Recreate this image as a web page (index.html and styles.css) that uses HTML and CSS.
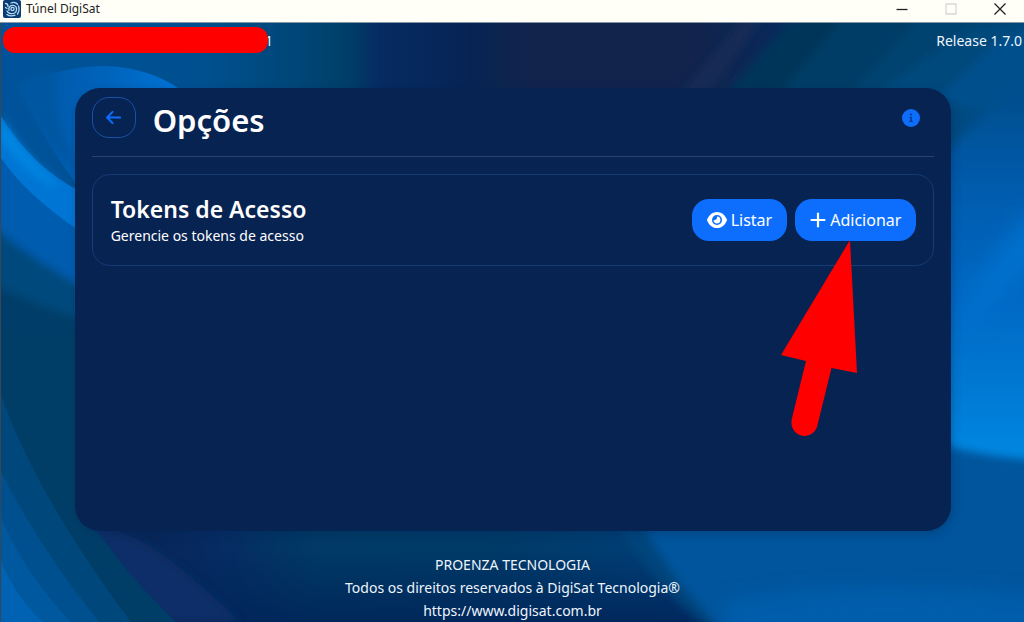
FILE: index.html
```html
<!DOCTYPE html>
<html lang="pt-BR">
<head>
<meta charset="utf-8">
<meta name="viewport" content="width=device-width, initial-scale=1">
<title>Túnel DigiSat</title>
<link rel="stylesheet" href="styles.css">
</head>
<body>
<div class="window">
  <header class="titlebar">
    <svg class="app-icon" viewBox="0 0 18 18" aria-hidden="true">
      <rect width="18" height="18" rx="2" fill="#0b3a75"/>
      <g fill="none" stroke="#b5dcf2" stroke-width="1.3" stroke-linecap="round">
        <circle cx="9.500" cy="9" r="1.600"/>
        <path d="M6 10.500C5 7 8 4.600 11 5.500c3.500 1.200 3.200 6 .5 7.500-3 1.500-6.500.5-7.500-2"/>
        <path d="M2.500 3.500c2 0 2.500 1.500 2.500 3M2.500 7.500l1.500 1M8 3c2-.8 5-.5 6.500 1.200M15.500 6c1 3 .5 6-1 8M4 14.500c2 1.500 5 1.700 8 .7"/>
      </g>
    </svg>
    <span class="titlebar-name">Túnel DigiSat</span>
    <div class="window-controls">
      <button class="window-button" type="button" aria-label="Minimizar"><svg viewBox="0 0 12 12"><path d="M.5 6.500h11"/></svg></button>
      <button class="window-button" type="button" aria-label="Maximizar" disabled><svg viewBox="0 0 12 12"><path d="M1 1h10v10H1z"/></svg></button>
      <button class="window-button" type="button" aria-label="Fechar"><svg viewBox="0 0 12 12"><path d="M.5.5l11 11M11.500.5l-11 11"/></svg></button>
    </div>
  </header>

  <div class="app">
    <svg class="wallpaper" viewBox="0 23 1024 599" preserveAspectRatio="none" aria-hidden="true">
      <defs>
        <linearGradient id="base" x1="0" x2="1" y1="0" y2="0">
          <stop offset="0" stop-color="#00539b"/><stop offset=".2" stop-color="#00508f"/>
          <stop offset=".29" stop-color="#004677"/><stop offset=".34" stop-color="#003e69"/>
          <stop offset=".37" stop-color="#062b63"/><stop offset=".46" stop-color="#062453"/>
          <stop offset=".52" stop-color="#12244c"/><stop offset=".68" stop-color="#12244c"/>
          <stop offset=".76" stop-color="#082a5b"/><stop offset=".84" stop-color="#003d66"/>
          <stop offset=".93" stop-color="#004a80"/><stop offset="1" stop-color="#005297"/>
        </linearGradient>
        <linearGradient id="right" x1="0" x2="0" y1="0" y2="1">
          <stop offset="0" stop-color="#004b85"/><stop offset=".25" stop-color="#0059a8"/>
          <stop offset=".6" stop-color="#006ac6"/><stop offset=".85" stop-color="#007cd5"/>
          <stop offset="1" stop-color="#0088e2"/>
        </linearGradient>
        <linearGradient id="arc" x1="0" x2="1" y1="0" y2="0">
          <stop offset="0" stop-color="#0056a3"/><stop offset=".5" stop-color="#0062b9"/><stop offset="1" stop-color="#0072d6"/>
        </linearGradient>
        <linearGradient id="floor" x1="0" x2="1" y1="0" y2="0">
          <stop offset="0" stop-color="#082c65"/><stop offset=".16" stop-color="#082452"/>
          <stop offset=".3" stop-color="#062b63"/><stop offset=".44" stop-color="#003a65"/>
          <stop offset=".7" stop-color="#003a68"/><stop offset="1" stop-color="#00407b"/>
        </linearGradient>
        <linearGradient id="floor-shade" x1="0" x2="0" y1="0" y2="1">
          <stop offset="0" stop-color="#002459" stop-opacity="0"/><stop offset="1" stop-color="#002459" stop-opacity=".85"/>
        </linearGradient>
        <filter id="soft" x="-20%" y="-20%" width="140%" height="140%"><feGaussianBlur stdDeviation="4"/></filter>
        <filter id="softer" x="-30%" y="-30%" width="160%" height="160%"><feGaussianBlur stdDeviation="10"/></filter>
      </defs>
      <rect y="23" width="1024" height="599" fill="url(#base)"/>
      <g filter="url(#soft)">
        <path d="M720 100L800 10h70L785 100z" fill="#05345a"/>
        <path d="M675 100L750 10h18L705 100z" fill="#182955"/>
        <path d="M775 100L850 10h190V100z" fill="#053d66"/>
        <path d="M845 100L925 10h120V100z" fill="#00426f"/>
        <path d="M865 100L965 30 1050 10V100z" fill="#00487c"/>
        <path d="M935 100L1000 40 1050 20V120z" fill="#004f8d"/>
      </g>
      <path d="M18 86Q60 66 105 66Q150 68 180 90L80 190Q45 145 18 86z" fill="url(#arc)"/>
      <path d="M16 84Q35 73 55 70C48 100 60 145 85 178Q45 146 16 84z" fill="#0056a0" filter="url(#soft)"/>
      <g filter="url(#soft)">
        <path d="M-15 195L90 300V560H-15z" fill="#003c68"/>
        <path d="M-15 212Q30 262 90 292V322Q30 305-15 280z" fill="#00487c"/>
        <path d="M-15 112Q20 165 90 202V292Q30 260-15 220z" fill="#005cae"/>
      </g>
      <path d="M0 116Q30 166 80 192V232Q25 195 0 158z" fill="#0075d3"/>
      <path d="M0 118Q28 162 52 180L56 188Q22 172 0 138z" fill="#0088e4" filter="url(#soft)"/>
      <path d="M70 524H690L720 622H0L60 480z" fill="url(#floor)"/>
      <path d="M70 550H690L720 622H0z" fill="url(#floor-shade)"/>
      <path d="M240 622Q165 550 130 536L70 510V622z" fill="#082d67" filter="url(#soft)"/>
      <path d="M0 330L75 335V500Q120 570 175 622H0z" fill="#003e68"/>
      <path d="M0 395Q35 495 130 622H0z" fill="#00487c"/>
      <path d="M0 472Q40 550 98 622H0z" fill="#00508f"/>
      <path d="M0 518Q25 575 70 622H0z" fill="#00589f"/>
      <path d="M0 562Q17 600 42 622H0z" fill="#0062b2"/>
      <path d="M615 520H1060V650H740Q660 600 615 520z" fill="#00457c" filter="url(#soft)"/>
      <path d="M640 520H1060V650H750Q680 600 640 520z" fill="#00559c" filter="url(#soft)"/>
      <path d="M930 430H1060V622H930z" fill="#00559c"/>
      <path d="M720 605Q850 575 1060 600V660H740z" fill="#005dac" filter="url(#softer)"/>
      <path d="M930 180Q965 115 1060 72V461Q975 458 930 440z" fill="url(#right)" filter="url(#soft)"/>
      <path d="M955 350Q975 250 1060 190V250Q1010 280 955 350z" fill="#0070cc" filter="url(#softer)"/>
    </svg>

    <div class="status">
      <div class="status-id"><span class="redaction"></span><span class="status-tail">1</span></div>
      <span>Release 1.7.0</span>
    </div>

    <main class="panel">
      <div class="panel-head">
        <button class="back" type="button" aria-label="Voltar">
          <svg viewBox="0 0 16 16" aria-hidden="true"><path d="M15 8H1.500M7 2L1.200 8 7 14"/></svg>
        </button>
        <h1>Opções</h1>
        <button class="info" type="button" aria-label="Informações">
          <svg viewBox="0 0 18 18" aria-hidden="true"><circle cx="9" cy="9" r="9" fill="#0d6efd"/><g fill="#0a3a8c"><circle cx="9" cy="5.500" r="1.100"/><path d="M7.300 7.800h2.500v3.900h1v1.200H7.200v-1.200h1.100V9h-1z"/></g></svg>
        </button>
      </div>
      <section class="option">
        <div class="option-text">
          <h2>Tokens de Acesso</h2>
          <p>Gerencie os tokens de acesso</p>
        </div>
        <div class="actions">
          <button class="action" type="button">
            <svg class="eye" viewBox="0 0 20 16" aria-hidden="true"><path fill="#fff" d="M10 0C5 0 1.700 3.700.2 7.300a2 2 0 000 1.400C1.700 12.300 5 16 10 16s8.300-3.700 9.800-7.300a2 2 0 000-1.400C18.300 3.700 15 0 10 0z"/><circle cx="10" cy="8" r="5" fill="#0d6efd"/><path fill="#fff" d="M10 4.600A3.400 3.400 0 116.600 8c1.900.7 4-1.100 3.400-3.400z"/></svg>
            Listar
          </button>
          <button class="action" type="button">
            <svg class="plus" viewBox="0 0 16 16" aria-hidden="true"><path d="M8 1.500v13M1.500 8h13"/></svg>
            Adicionar
          </button>
          <svg class="pointer" viewBox="0 0 76 196" aria-hidden="true"><path fill="#f00" d="M69 0L76 133 50.500 128 36 187C33 195.500 25 196 22 196 14 195 8.500 187 11 178L25 121 0 115z"/></svg>
        </div>
      </section>
    </main>

    <footer class="footer">
      <p>PROENZA TECNOLOGIA</p>
      <p>Todos os direitos reservados à DigiSat Tecnologia®</p>
      <p><a href="https://www.digisat.com.br">https://www.digisat.com.br</a></p>
    </footer>
  </div>
</div>
</body>
</html>
```
FILE: styles.css
```css
* { box-sizing: border-box; }

body {
  margin: 0;
  color: #fff;
  font: 14px/23px "Segoe UI", "Noto Sans", sans-serif;
}

h1, h2, p { margin: 0; }

button {
  padding: 0;
  border: 0;
  background: none;
  color: inherit;
  font: inherit;
}

svg { display: block; }

.window {
  display: flex;
  flex-direction: column;
  min-height: 100vh;
}

.titlebar {
  display: flex;
  align-items: center;
  height: 23px;
  padding: 0 0 5px 3px;
  gap: 5px;
  background: #fffff8;
  border-bottom: 1px solid #8796a5;
  color: #222;
  font-size: 12px;
  line-height: 16px;
}

.app-icon { width: 18px; height: 18px; }

.window-controls {
  display: flex;
  margin-left: auto;
}

.window-button {
  display: grid;
  place-items: center;
  width: 49px;
  height: 17px;
}

.window-button svg {
  width: 12px;
  height: 12px;
  fill: none;
  stroke: #222;
  stroke-width: 1.3;
}

.window-button:disabled svg { stroke: #d8d8d4; }

.app {
  position: relative;
  isolation: isolate;
  display: flex;
  flex: 1;
  flex-direction: column;
  border-left: 1px solid #3d4650;
  background: #00508f;
}

.wallpaper {
  position: absolute;
  inset: 0;
  z-index: -1;
  width: 100%;
  height: 100%;
}

.status {
  display: flex;
  align-items: center;
  justify-content: space-between;
  padding: 3px 2px 5px 2px;
  height: 36px;
  color: #eef5fc;
}

.status-id {
  display: flex;
  align-items: center;
}

.redaction {
  z-index: 1;
  width: 265px;
  height: 26px;
  border-radius: 12px;
  background: #f00;
}

.status-tail { margin-left: -3px; }

.panel {
  flex: 1;
  margin: 29px 7.1% 22px 7.2%;
  padding: 9px 17px;
  border-radius: 25px;
  background: #072352;
  box-shadow: 2px 3px 8px #0023554d;
}

.panel-head {
  display: flex;
  align-items: flex-start;
  height: 60px;
  border-bottom: 1px solid #2b4270;
}

.back {
  display: grid;
  place-items: center;
  width: 44px;
  height: 41px;
  border: 1px solid #1750a8;
  border-radius: 17px;
}

.back svg {
  width: 15px;
  height: 15px;
  fill: none;
  stroke: #0d6efd;
  stroke-width: 2.2;
  stroke-linecap: round;
  stroke-linejoin: round;
}

.panel-head h1 {
  margin-left: 17px;
  font-size: 31px;
  font-weight: 600;
  line-height: 46px;
}

.info { margin: 12px 14px 0 auto; }
.info svg { width: 18px; height: 18px; }

.option {
  display: flex;
  align-items: center;
  justify-content: space-between;
  min-height: 92px;
  margin-top: 17px;
  padding: 0 17px 0 18px;
  border: 1px solid #153b78;
  border-radius: 18px;
}

.option h2 {
  font-size: 23px;
  font-weight: 600;
  line-height: 30px;
}

.actions {
  position: relative;
  display: flex;
  gap: 8px;
}

.action {
  display: flex;
  align-items: center;
  justify-content: center;
  gap: 4px;
  height: 42px;
  padding: 0 15px;
  border-radius: 17px;
  background: #0d6efd;
  font-size: 16px;
}

.eye { width: 20px; height: 16px; }

.plus {
  width: 16px;
  height: 16px;
  fill: none;
  stroke: #fff;
  stroke-width: 2.2;
  stroke-linecap: round;
}

.pointer {
  position: absolute;
  top: 41px;
  right: 59px;
  width: 76px;
  height: 196px;
}

.footer { text-align: center; color: #eef5fc; }
.footer a { color: inherit; text-decoration: none; }
```
